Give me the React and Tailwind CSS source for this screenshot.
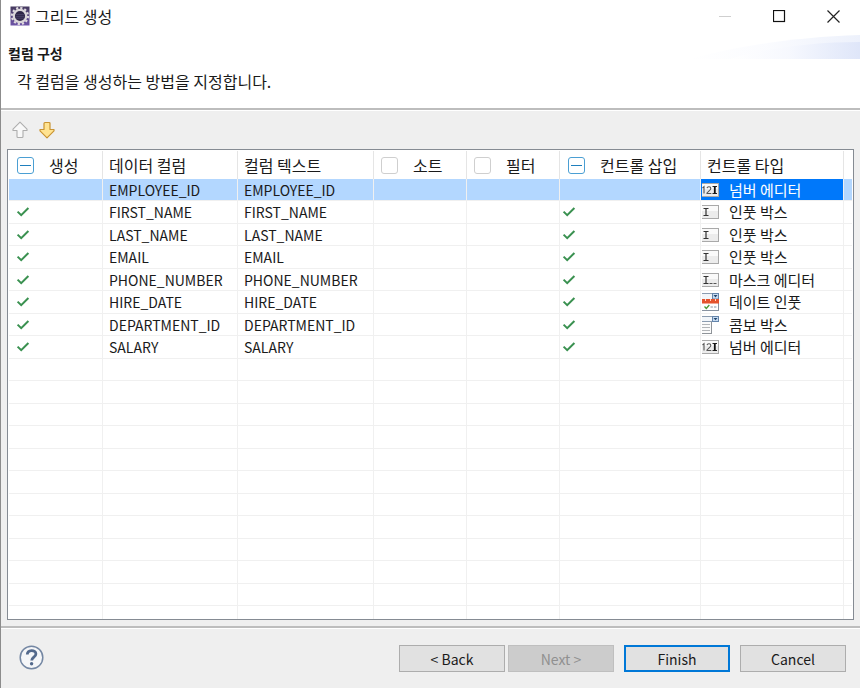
import { useEffect, useRef, useState } from "react";

const ROWS = [
  { name: "EMPLOYEE_ID", type: "넘버 에디터", icon: "number", on: false },
  { name: "FIRST_NAME", type: "인풋 박스", icon: "input", on: true },
  { name: "LAST_NAME", type: "인풋 박스", icon: "input", on: true },
  { name: "EMAIL", type: "인풋 박스", icon: "input", on: true },
  { name: "PHONE_NUMBER", type: "마스크 에디터", icon: "mask", on: true },
  { name: "HIRE_DATE", type: "데이트 인풋", icon: "date", on: true },
  { name: "DEPARTMENT_ID", type: "콤보 박스", icon: "combo", on: true },
  { name: "SALARY", type: "넘버 에디터", icon: "number", on: true },
];

const EMPTY_ROWS = Array.from({ length: 12 }, (_, i) => i);

function AppIcon() {
  return (
    <svg width="20" height="20" viewBox="0 0 20 20" aria-hidden="true">
      <defs>
        <linearGradient id="plate" x1="0" y1="0" x2="0" y2="1">
          <stop offset="0" stopColor="#453a5e" />
          <stop offset="1" stopColor="#6f55a8" />
        </linearGradient>
      </defs>
      <rect x="0.5" y="0.5" width="19" height="19" fill="url(#plate)" />
      <circle cx="10" cy="10" r="8" fill="none" stroke="#e0dbdf" strokeWidth="2.2" strokeDasharray="2.2 1.99" />
      <circle cx="10" cy="10" r="6.200" fill="#2e2647" stroke="#dcd7da" strokeWidth="2.2" />
      <path d="M6 8.600h8M5.500 10.400h9M6 12.200h8" stroke="#544a72" strokeWidth="0.7" />
    </svg>
  );
}

function Tick() {
  return (
    <svg className="block" width="14" height="12" viewBox="0 0 14 12" role="img" aria-label="✓">
      <path d="M1.600 5.600 5.200 9.200 12.400 2" fill="none" stroke="#3a9150" strokeWidth="2" />
    </svg>
  );
}

function Field({ children }) {
  return (
    <svg className="block" width="18" height="18" viewBox="0 0 18 18" aria-hidden="true">
      <rect x="1" y="2" width="17" height="14" fill="#a9a9a9" />
      <rect x="1" y="3" width="16" height="12" fill="#fafafa" />
      <rect x="1" y="8" width="16" height="7" fill="#ececec" />
      {children}
    </svg>
  );
}

const BEAM = "M2.500 5.500h5M5 5.500v7M2.500 12.500h5";

function TypeIcon({ kind }) {
  if (kind === "number") {
    return (
      <Field>
        <path d="M1.500 7 3 5.700V12.500M6 7.200c.3-2 3.800-2 3.800.2 0 1.600-2.600 2.800-3.800 4.600v.5h4.300" fill="none" stroke="#555" strokeWidth="1.100" />
        <path d="M11.500 5.500h4.500M11.500 12.500h4.500" fill="none" stroke="#222" />
        <path d="M13.800 5.500v7" stroke="#111" strokeWidth="1.800" />
      </Field>
    );
  }
  if (kind === "input") {
    return (
      <Field>
        <path d={BEAM} fill="none" stroke="#333" strokeWidth="1.200" />
      </Field>
    );
  }
  if (kind === "mask") {
    return (
      <Field>
        <path d={BEAM} fill="none" stroke="#333" strokeWidth="1.200" />
        <path d="M8.500 12.500h3M12.500 12.500h3" stroke="#555" />
      </Field>
    );
  }
  if (kind === "date") {
    return (
      <svg className="block" width="18" height="18" viewBox="0 0 18 18" aria-hidden="true">
        <rect x="1" y="0" width="17" height="7" fill="#8b9cb0" />
        <rect x="1" y="1" width="10" height="6" fill="#f2f6fa" />
        <rect x="11.500" y="0.500" width="6" height="5.500" fill="#c8dcf2" stroke="#6485ab" />
        <path d="M12.500 2h4l-2 2.500z" fill="#23476f" />
        <rect x="1" y="9" width="17" height="9" fill="#8792a0" />
        <rect x="1" y="9" width="16" height="8" fill="#fff" />
        <rect x="1" y="6" width="17" height="4.500" fill="#e5532d" />
        <path d="M4.500 6v2M9.500 6v2M14.500 6v2" stroke="#ffd9c8" />
        <path d="M3.500 13.600l1.800 1.800 3-3.400" fill="none" stroke="#4b9a34" strokeWidth="1.400" />
        <path d="M9.500 14h2.400M13 14h2.400" stroke="#8793a0" />
      </svg>
    );
  }
  return (
    <svg className="block" width="18" height="18" viewBox="0 0 18 18" aria-hidden="true">
      <rect x="1" y="0" width="17" height="6" fill="#8b9cb0" />
      <rect x="1" y="1" width="10" height="4" fill="#f2f6fa" />
      <rect x="11.500" y="0.500" width="6" height="5" fill="#c8dcf2" stroke="#6485ab" />
      <path d="M12.500 2h4l-2 2.300z" fill="#23476f" />
      <rect x="1" y="6" width="10" height="12" fill="#8f9499" />
      <rect x="1" y="6" width="9" height="11" fill="#fbfbfb" />
      <path d="M1 8.500h8M1 11.500h8M1 14.500h8" stroke="#b2b5b8" />
    </svg>
  );
}

function HeaderCheck({ label, mixed }) {
  const ref = useRef(null);
  const [state, setState] = useState(mixed ? "mixed" : "off");
  useEffect(() => {
    ref.current.indeterminate = state === "mixed";
  }, [state]);
  return (
    <label className="flex items-center">
      <span className="grid shrink-0 place-items-center">
        <input
          ref={ref}
          type="checkbox"
          checked={state === "on"}
          onChange={(e) => setState(e.target.checked ? "on" : "off")}
          className="col-start-1 row-start-1 size-[17px] appearance-none rounded-[3px] border border-[#cfcfcf] bg-white checked:border-[#2b8ac6] indeterminate:border-[#4b9fd3]"
        />
        {state === "mixed" && <span className="pointer-events-none col-start-1 row-start-1 h-px w-[11px] bg-[#1f7fbd]" />}
        {state === "on" && <span className="pointer-events-none col-start-1 row-start-1 size-[9px] bg-[#2b8ac6]" />}
      </span>
      <span className="pl-[15px]">{label}</span>
    </label>
  );
}

const TH = "h-7 border-r border-[#e5e5e5] p-0 text-left text-[16px] font-normal";
const TD = "border-r border-b border-[#f0f0f0] p-0";
const BTN = "h-[27px] w-[106px] text-[14px] leading-5";

export default function App() {
  return (
    <div className="flex h-screen min-h-[400px] flex-col border-l border-[#8c8c8c] bg-[#efefef] font-['Noto_Sans_CJK_KR',sans-serif] text-[15px] leading-5 text-[#1a1a1a]">
      <header className="bg-white">
        <div className="flex h-8 items-center pl-[9px]">
          <AppIcon />
          <h1 className="flex-1 pl-[5px] text-[16px]">그리드 생성</h1>
          <button type="button" aria-label="최소화" disabled className="grid h-8 w-[54px] place-items-center">
            <svg width="13" height="13" viewBox="0 0 13 13"><path d="M0 6.500h12" stroke="#cfcfcf" /></svg>
          </button>
          <button type="button" aria-label="최대화" className="grid h-8 w-[54px] place-items-center">
            <svg width="13" height="13" viewBox="0 0 13 13"><rect x="0.500" y="0.500" width="11" height="11" fill="none" stroke="#111" strokeWidth="1.200" /></svg>
          </button>
          <button type="button" aria-label="닫기" className="grid h-8 w-[54px] place-items-center">
            <svg width="13" height="13" viewBox="0 0 13 13"><path d="M.5.5l12 12M12.500.5l-12 12" stroke="#222" strokeWidth="1.200" /></svg>
          </button>
        </div>
        <div className="flex h-[76px] justify-between">
          <div className="pt-[11px] pl-[7px]">
            <h2 className="text-[14px] leading-5 font-bold">컬럼 구성</h2>
            <p className="pt-2 pl-[9px] text-[16px]">각 컬럼을 생성하는 방법을 지정합니다.</p>
          </div>
          <div className="pt-[2px]">
            <svg width="170" height="26" viewBox="0 0 170 26" aria-hidden="true">
              <defs>
                <linearGradient id="wash">
                  <stop offset="0" stopColor="#fff" />
                  <stop offset="0.450" stopColor="#f6f8fe" />
                  <stop offset="1" stopColor="#dbe3f8" />
                </linearGradient>
              </defs>
              <path d="M0 25C40 14 100 3 170 1V25Z" fill="url(#wash)" opacity="0.500" />
              <path d="M40 25C70 15 120 8 170 8V25Z" fill="url(#wash)" opacity="0.800" />
            </svg>
          </div>
        </div>
        <div className="h-[3px] border-t-2 border-[#bdbdbd] bg-white" />
      </header>

      <main className="flex min-h-0 flex-1 flex-col px-[6px] pb-[6px]">
        <div className="flex h-[38px] shrink-0 items-center gap-[7px] pl-[3px]">
          <button type="button" aria-label="위로" disabled className="grid size-5 place-items-center">
            <svg width="16" height="18" viewBox="0 0 16 18"><path d="M8 1.200 15 8.200V9.500H11v6q0 1-1 1H6q-1 0-1-1v-6H1V8.200Z" fill="#f8f8f8" stroke="#adadad" strokeWidth="1.100" strokeLinejoin="round" /></svg>
          </button>
          <button type="button" aria-label="아래로" className="grid size-5 place-items-center">
            <svg width="16" height="18" viewBox="0 0 16 18"><path d="M8 16.800 15 9.800V8.500H11v-6q0-1-1-1H6q-1 0-1 1v6H1V9.800Z" fill="#ffe391" stroke="#c99433" strokeWidth="1.200" strokeLinejoin="round" /></svg>
          </button>
        </div>

        <div className="min-h-0 flex-1 overflow-hidden border border-[#858b93] bg-white p-px">
          <table className="w-full table-fixed border-separate border-spacing-0">
            <colgroup>
              <col className="w-[94px]" />
              <col className="w-[135px]" />
              <col className="w-[136px]" />
              <col className="w-[93px]" />
              <col className="w-[93px]" />
              <col className="w-[141px]" />
              <col className="w-[143px]" />
              <col />
            </colgroup>
            <thead>
              <tr>
                <th className={`${TH} pl-2`}><HeaderCheck label="생성" mixed /></th>
                <th className={`${TH} pl-[6px]`}>데이터 컬럼</th>
                <th className={`${TH} pl-[6px]`}>컬럼 텍스트</th>
                <th className={`${TH} pl-[7px]`}><HeaderCheck label="소트" /></th>
                <th className={`${TH} pl-[7px]`}><HeaderCheck label="필터" /></th>
                <th className={`${TH} pl-2`}><HeaderCheck label="컨트롤 삽입" mixed /></th>
                <th className={`${TH} pl-[6px]`}>컨트롤 타입</th>
                <td />
              </tr>
            </thead>
            <tbody>
              {ROWS.map((row, i) => (
                <tr key={row.name} className={`odd:h-[22px] even:h-[23px] ${i === 0 ? "bg-[#b3d7ff]" : ""}`}>
                  <td className={`${TD} pl-[7px]`}>{row.on && <Tick />}</td>
                  <td className={`${TD} pl-[6px] text-[14px]`}>{row.name}</td>
                  <td className={`${TD} pl-[6px] text-[14px]`}>{row.name}</td>
                  <td className={TD} />
                  <td className={TD} />
                  <td className={`${TD} pl-[2px]`}>{row.on && <Tick />}</td>
                  <td className={`${TD} ${i === 0 ? "bg-[#0078fa] text-white" : ""}`}>
                    <span className="flex items-center gap-[10px]">
                      <TypeIcon kind={row.icon} />
                      {row.type}
                    </span>
                  </td>
                  <td className="border-b border-[#f0f0f0] p-0" />
                </tr>
              ))}
              {EMPTY_ROWS.map((n) => (
                <tr key={n} className="odd:h-[22px] even:h-[23px]">
                  <td className={TD} />
                  <td className={TD} />
                  <td className={TD} />
                  <td className={TD} />
                  <td className={TD} />
                  <td className={TD} />
                  <td className={TD} />
                  <td className="border-b border-[#f0f0f0] p-0" />
                </tr>
              ))}
            </tbody>
          </table>
        </div>
      </main>

      <footer>
        <div className="h-[3px] border-t-2 border-[#bdbdbd] bg-white" />
        <div className="flex h-[59px] items-start pt-4 pr-[14px] pl-[18px]">
          <button type="button" aria-label="도움말" className="mr-auto">
            <svg className="block" width="25" height="25" viewBox="0 0 25 25">
              <circle cx="12.500" cy="12.500" r="11.300" fill="#f5f6f8" stroke="#7487a3" strokeWidth="1.500" />
              <path d="M8.300 9.600c0-5.400 8.600-5.200 8.600-.7 0 3.200-4.200 3.300-4.200 6.600" fill="none" stroke="#53698c" strokeWidth="2.800" />
              <circle cx="12.600" cy="18.700" r="1.700" fill="#53698c" />
            </svg>
          </button>
          <div className="flex gap-[3px]">
            <button type="button" className={`${BTN} border border-[#adadad] bg-[#e1e1e1]`}>&lt; Back</button>
            <button type="button" disabled className={`${BTN} border border-[#bfbfbf] bg-[#cccccc] text-[#909090]`}>Next &gt;</button>
          </div>
          <button type="button" className={`${BTN} mx-[10px] border-2 border-[#0078d7] bg-[#e1e1e1]`}>Finish</button>
          <button type="button" className={`${BTN} border border-[#adadad] bg-[#e1e1e1]`}>Cancel</button>
        </div>
      </footer>
    </div>
  );
}
